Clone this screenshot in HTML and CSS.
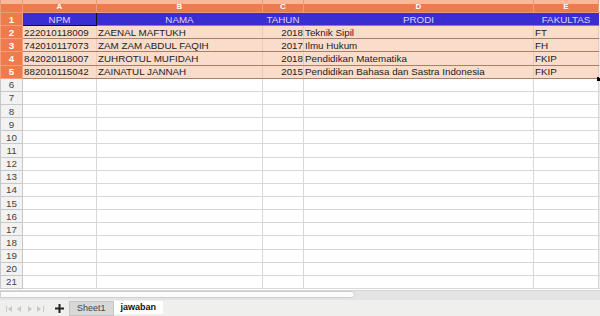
FILE: index.html
```html
<!DOCTYPE html>
<html lang="en">
<head>
    <meta charset="UTF-8">
    <title>jawaban</title>
    <link rel="stylesheet" href="styles.css">
</head>
<body>
    <div class="sheet">
        <table class="grid">
            <colgroup>
                <col class="c-row">
                <col class="c-a">
                <col class="c-b">
                <col class="c-c">
                <col class="c-d">
                <col class="c-e">
                <col class="c-rest">
            </colgroup>
            <tr class="col-head">
                <th class="corner"></th>
                <th>A</th>
                <th>B</th>
                <th>C</th>
                <th class="dark">D</th>
                <th class="dark">E</th>
                <th class="rest"></th>
            </tr>
            <tr class="title">
                <th class="num">1</th>
                <td class="cursor">NPM</td>
                <td>NAMA</td>
                <td>TAHUN</td>
                <td class="dark">PRODI</td>
                <td class="dark">FAKULTAS</td>
                <td class="rest"></td>
            </tr>
            <tr class="data">
                <th class="num">2</th>
                <td>222010118009</td>
                <td>ZAENAL MAFTUKH</td>
                <td class="right">2018</td>
                <td class="dark">Teknik Sipil</td>
                <td class="dark">FT</td>
                <td class="rest"></td>
            </tr>
            <tr class="data">
                <th class="num">3</th>
                <td>742010117073</td>
                <td>ZAM ZAM ABDUL FAQIH</td>
                <td class="right">2017</td>
                <td class="dark">Ilmu Hukum</td>
                <td class="dark">FH</td>
                <td class="rest"></td>
            </tr>
            <tr class="data">
                <th class="num">4</th>
                <td>842020118007</td>
                <td>ZUHROTUL MUFIDAH</td>
                <td class="right">2018</td>
                <td class="dark">Pendidikan Matematika</td>
                <td class="dark">FKIP</td>
                <td class="rest"></td>
            </tr>
            <tr class="data last">
                <th class="num">5</th>
                <td>882010115042</td>
                <td>ZAINATUL JANNAH</td>
                <td class="right">2015</td>
                <td class="dark">Pendidikan Bahasa dan Sastra Indonesia</td>
                <td class="dark">FKIP<span class="handle"></span></td>
                <td class="rest"></td>
            </tr>
            <tr><th>6</th><td></td><td></td><td></td><td class="dark"></td><td class="dark"></td><td class="rest"></td></tr>
            <tr><th>7</th><td></td><td></td><td></td><td class="dark"></td><td class="dark"></td><td class="rest"></td></tr>
            <tr><th>8</th><td></td><td></td><td></td><td class="dark"></td><td class="dark"></td><td class="rest"></td></tr>
            <tr><th>9</th><td></td><td></td><td></td><td class="dark"></td><td class="dark"></td><td class="rest"></td></tr>
            <tr><th>10</th><td></td><td></td><td></td><td class="dark"></td><td class="dark"></td><td class="rest"></td></tr>
            <tr><th>11</th><td></td><td></td><td></td><td class="dark"></td><td class="dark"></td><td class="rest"></td></tr>
            <tr><th>12</th><td></td><td></td><td></td><td class="dark"></td><td class="dark"></td><td class="rest"></td></tr>
            <tr><th>13</th><td></td><td></td><td></td><td class="dark"></td><td class="dark"></td><td class="rest"></td></tr>
            <tr><th>14</th><td></td><td></td><td></td><td class="dark"></td><td class="dark"></td><td class="rest"></td></tr>
            <tr><th>15</th><td></td><td></td><td></td><td class="dark"></td><td class="dark"></td><td class="rest"></td></tr>
            <tr><th>16</th><td></td><td></td><td></td><td class="dark"></td><td class="dark"></td><td class="rest"></td></tr>
            <tr><th>17</th><td></td><td></td><td></td><td class="dark"></td><td class="dark"></td><td class="rest"></td></tr>
            <tr><th>18</th><td></td><td></td><td></td><td class="dark"></td><td class="dark"></td><td class="rest"></td></tr>
            <tr><th>19</th><td></td><td></td><td></td><td class="dark"></td><td class="dark"></td><td class="rest"></td></tr>
            <tr><th>20</th><td></td><td></td><td></td><td class="dark"></td><td class="dark"></td><td class="rest"></td></tr>
            <tr><th>21</th><td></td><td></td><td></td><td class="dark"></td><td class="dark"></td><td class="rest"></td></tr>
        </table>

        <div class="hscroll">
            <div class="thumb"></div>
        </div>

        <div class="tabbar">
            <svg class="nav" width="40" height="10" viewBox="0 0 40 10">
                <rect x="1" y="2" width="1" height="6" fill="#c8c8c8"/>
                <path d="M7 2 L3 5 L7 8 Z" fill="#c8c8c8"/>
                <path d="M16 2 L12 5 L16 8 Z" fill="#c8c8c8"/>
                <path d="M23 2 L27 5 L23 8 Z" fill="#c8c8c8"/>
                <path d="M32 2 L36 5 L32 8 Z" fill="#c8c8c8"/>
                <rect x="38" y="2" width="1" height="6" fill="#c8c8c8"/>
            </svg>
            <svg class="plus" width="9" height="9" viewBox="0 0 9 9">
                <rect x="3.5" y="0" width="2" height="9" fill="#222"/>
                <rect x="0" y="3.5" width="9" height="2" fill="#222"/>
            </svg>
            <div class="tab sheet1">Sheet1</div>
            <div class="tab active">jawaban</div>
        </div>
    </div>
</body>
</html>
```

FILE: styles.css
```css
body {
    margin: 0;
    background: #ffffff;
    font-family: "Liberation Sans", Arial, sans-serif;
}

.sheet {
    width: 600px;
    height: 316px;
    overflow: hidden;
}

.grid {
    border-collapse: collapse;
    table-layout: fixed;
    width: 600px;
    font-size: 9.8px;
}

.c-row { width: 22px; }
.c-a { width: 74px; }
.c-b { width: 166px; }
.c-c { width: 41px; }
.c-d { width: 230px; }
.c-e { width: 65px; }
.c-rest { width: 2px; }

.grid th,
.grid td {
    height: 13.15px;
    padding: 0;
    border: 1px solid #d8d8d8;
    border-top: none;
    white-space: nowrap;
    overflow: hidden;
    line-height: 11px;
    color: #222;
    box-sizing: border-box;
}

.grid th {
    background: #f2f2f2;
    font-weight: normal;
    color: #444;
    text-align: center;
    border-color: #c8c8c8;
}

.grid td.dark {
    border-left-color: #9a9a9a;
}

.grid td.rest {
    border-right: none;
    background: #ececec;
}

.col-head th {
    height: 12px;
    background: linear-gradient(#f9b89a 0, #f9b89a 35%, #ef7a4c 35%, #ef7a4c 100%);
    color: #ffffff;
    font-weight: bold;
    font-size: 8px;
    border-color: #e89c78;
    line-height: 10px;
    padding-top: 2px;
}

.col-head th.rest {
    background: #f2f2f2;
    border-right: none;
}

.title td {
    background: #3b2ed0;
    color: #d9d6f6;
    text-align: center;
    border-color: #3b2ed0;
    border-bottom-color: #9d8070;
}

.title td.dark {
    border-left-color: #222;
}

.title td.rest,
.data td.rest {
    background: #ececec;
    border-color: #d8d8d8;
}

.title td.cursor {
    border: 1px solid #111;
}

.grid th.num {
    background: #ef7a4c;
    color: #ffffff;
    font-weight: bold;
    border-color: #f0a07c;
}

.data td {
    background: #fadccb;
    border-color: #f0c8b4;
    border-bottom-color: #a88068;
    padding-left: 1px;
}

.data td.dark {
    border-left-color: #222;
}

.data td.right {
    text-align: right;
    padding: 0;
}

.data.last td {
    position: relative;
    overflow: visible;
}

.handle {
    position: absolute;
    right: -3px;
    bottom: -3px;
    width: 4px;
    height: 4px;
    background: #000;
}

.hscroll {
    height: 8px;
    margin-top: 1px;
    background: #e4e4e4;
    border-top: 1px solid #d4d4d4;
}

.thumb {
    width: 355px;
    height: 7px;
    background: #fbfbfb;
    border: 1px solid #cfcfcf;
    border-radius: 0 4px 4px 0;
    box-sizing: border-box;
}

.tabbar {
    height: 22px;
    background: #efefee;
    display: flex;
    align-items: flex-start;
    padding-top: 1px;
    box-sizing: border-box;
    font-size: 9px;
    border-top: 1px solid #e2e2e2;
}

.nav {
    margin: 3px 10px 0 5px;
}

.plus {
    margin: 3px 5px 0 0;
}

.tab {
    padding: 0 7px;
    height: 13px;
    line-height: 13px;
    color: #333;
}

.tab.sheet1 {
    background: #d8d8d8;
    border: 1px solid #c4c4c4;
    color: #444;
}

.tab.active {
    background: #ffffff;
    font-weight: bold;
    color: #111;
}
```
